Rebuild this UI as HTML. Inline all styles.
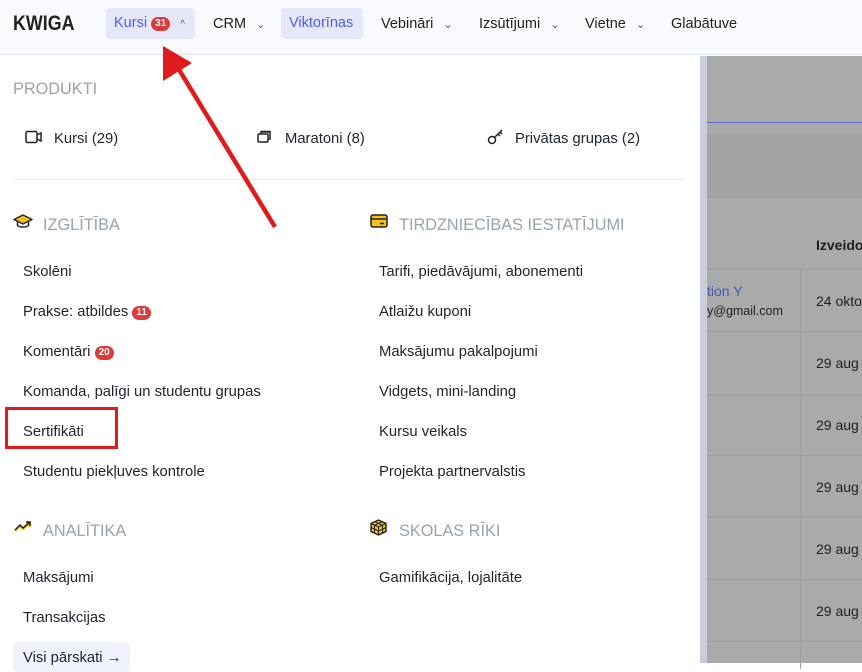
<!DOCTYPE html>
<html><head><meta charset="utf-8">
<style>
*{margin:0;padding:0;box-sizing:border-box}
body{width:862px;height:663px;overflow:hidden;font-family:"Liberation Sans",sans-serif;color:#1f2330;background:#fff;position:relative;font-size:14px}
.hdr{position:absolute;left:0;top:0;width:862px;height:55px;background:#f9f9fe;border-bottom:1px solid #e2e3e8}
.logo{position:absolute;left:13px;top:12px;font-size:21px;font-weight:bold;color:#222;transform:scaleX(0.85);transform-origin:left}
.nav{position:absolute;top:8px;height:31px;line-height:31px;font-size:14.5px;color:#222;padding:0 8px;margin-top:1px}
.nav.act{background:#e6e8fa;color:#4f5ef0;border-radius:4px;margin-top:0}
.chev{font-size:11px;margin-left:6px;color:#555}
.badge{display:inline-block;background:#dd3b3b;color:#fff;font-size:10px;font-weight:bold;border-radius:8px;padding:0 4px;height:14px;line-height:14px;vertical-align:1px}
.t{position:absolute;font-size:14.8px;white-space:nowrap;margin-top:2px}
.h{position:absolute;font-size:16.3px;color:#9aa1b2;white-space:nowrap;margin-top:2px}
.right{position:absolute;left:707px;top:56px;width:155px;height:607px;background:#aaaaaa}
.strip{position:absolute;left:700px;top:56px;width:7px;height:607px;background:#c7ced8}
.rt{position:absolute;font-size:14px;color:#222;white-space:nowrap}
.hl{position:absolute;left:0;width:155px;height:1px;background:#9e9e9e}
</style></head><body>
<div class="hdr">
<div class="logo">KWIGA</div>
<div class="nav act" style="left:106px;width:89px">Kursi <span class="badge">31</span> <span class="chev" style="font-size:10px">^</span></div>
<div class="nav" style="left:205px">CRM <span class="chev">⌄</span></div>
<div class="nav act" style="left:281px;width:82px">Viktorīnas</div>
<div class="nav" style="left:373px">Vebināri <span class="chev">⌄</span></div>
<div class="nav" style="left:471px">Izsūtījumi <span class="chev">⌄</span></div>
<div class="nav" style="left:577px">Vietne <span class="chev">⌄</span></div>
<div class="nav" style="left:663px">Glabātuve</div>
</div>

<div class="h" style="left:13px;top:78px">PRODUKTI</div>
<svg style="position:absolute;left:25px;top:130px" width="18" height="14" viewBox="0 0 18 14"><rect x="1" y="1.5" width="11" height="11" rx="1.5" fill="none" stroke="#222" stroke-width="1.5"/><path d="M12 5l4-2v8l-4-2" fill="none" stroke="#222" stroke-width="1.5"/></svg>
<div class="t" style="left:54px;top:129px">Kursi (29)</div>
<svg style="position:absolute;left:257px;top:128px" width="17" height="16" viewBox="0 0 17 16"><rect x="1" y="6" width="10" height="8" rx="1" fill="none" stroke="#222" stroke-width="1.5"/><path d="M4 6V3.5h9V11h-2M4 4h9" fill="none" stroke="#222" stroke-width="1.5"/></svg>
<div class="t" style="left:285px;top:129px">Maratoni (8)</div>
<svg style="position:absolute;left:487px;top:128px" width="17" height="17" viewBox="0 0 17 17"><circle cx="5" cy="12" r="3.5" fill="none" stroke="#222" stroke-width="1.5"/><path d="M7.5 9.5L15 2M11 6l2 2M13 4l2 2" fill="none" stroke="#222" stroke-width="1.5"/></svg>
<div class="t" style="left:515px;top:129px">Privātas grupas (2)</div>
<div style="position:absolute;left:12px;top:179px;width:673px;height:1px;background:#eceef2"></div>

<svg style="position:absolute;left:13px;top:213px" width="20" height="16" viewBox="0 0 20 16"><path d="M10 2L1 6.5l9 4.5 9-4.5z" fill="#f2c21b" stroke="#222" stroke-width="1.4" stroke-linejoin="round"/><path d="M4.5 8.5v4c2 2 9 2 11 0v-4" fill="none" stroke="#222" stroke-width="1.5"/></svg>
<div class="h" style="left:43px;top:214px">IZGLĪTĪBA</div>
<div class="t" style="left:23px;top:262px">Skolēni</div>
<div class="t" style="left:23px;top:302px">Prakse: atbildes <span class="badge">11</span></div>
<div class="t" style="left:23px;top:342px">Komentāri <span class="badge">20</span></div>
<div class="t" style="left:23px;top:382px">Komanda, palīgi un studentu grupas</div>
<div class="t" style="left:23px;top:422px">Sertifikāti</div>
<div style="position:absolute;left:5px;top:407px;width:113px;height:42px;border:3px solid #e01b1b"></div>
<div class="t" style="left:23px;top:462px">Studentu piekļuves kontrole</div>

<svg style="position:absolute;left:14px;top:520px" width="19" height="14" viewBox="0 0 19 14"><path d="M1 11l5-5 3 3 7-6M12 3h4v4" fill="none" stroke="#f2c21b" stroke-width="2.5"/><path d="M1 10l5-5 3 3 7-6M12 2h4v4" fill="none" stroke="#222" stroke-width="1.5"/></svg>
<div class="h" style="left:43px;top:520px">ANALĪTIKA</div>
<div class="t" style="left:23px;top:568px">Maksājumi</div>
<div class="t" style="left:23px;top:608px">Transakcijas</div>
<div style="position:absolute;left:13px;top:642px;width:117px;height:30px;background:#eff3fc;border-radius:4px"></div>
<div class="t" style="left:23px;top:648px">Visi pārskati →</div>

<svg style="position:absolute;left:370px;top:214px" width="18" height="14" viewBox="0 0 18 14"><rect x="1" y="1" width="16" height="12" rx="2" fill="#f2c21b" stroke="#222" stroke-width="1.5"/><path d="M1 5h16" stroke="#222" stroke-width="1.5"/><path d="M10 9.5h4" stroke="#222" stroke-width="1.5"/></svg>
<div class="h" style="left:399px;top:214px">TIRDZNIECĪBAS IESTATĪJUMI</div>
<div class="t" style="left:379px;top:262px">Tarifi, piedāvājumi, abonementi</div>
<div class="t" style="left:379px;top:302px">Atlaižu kuponi</div>
<div class="t" style="left:379px;top:342px">Maksājumu pakalpojumi</div>
<div class="t" style="left:379px;top:382px">Vidgets, mini-landing</div>
<div class="t" style="left:379px;top:422px">Kursu veikals</div>
<div class="t" style="left:379px;top:462px">Projekta partnervalstis</div>
<svg style="position:absolute;left:370px;top:519px" width="17" height="17" viewBox="0 0 17 17"><path d="M8.5 1L16 4.5v8L8.5 16 1 12.5v-8z" fill="#f2c21b" stroke="#222" stroke-width="1.4"/><path d="M1 4.5l7.5 3.5L16 4.5M8.5 8v8M4.5 6v8.5M12.5 6v8.5M1 8.5l7.5 3.5 7.5-3.5M4.8 2.7l7.5 3.5M12.2 2.7l-7.5 3.5" fill="none" stroke="#222" stroke-width="1"/></svg>
<div class="h" style="left:399px;top:520px">SKOLAS RĪKI</div>
<div class="t" style="left:379px;top:568px">Gamifikācija, lojalitāte</div>

<div class="strip"></div>
<div class="right">
<div style="position:absolute;left:0;top:66px;width:155px;height:1px;background:#5a67c4"></div>
<div style="position:absolute;left:0;top:77px;width:155px;height:65px;background:#a3a3a3"></div>
<div class="rt" style="left:109px;top:181px;font-weight:bold">Izveido</div>
<div style="position:absolute;left:93px;top:213px;width:1px;height:400px;background:#9e9e9e"></div>
<div class="hl" style="top:213px"></div>
<div class="rt" style="left:0;top:227px;color:#4556b8">tion Y</div>
<div class="rt" style="left:0;top:248px;font-size:12.5px">y@gmail.com</div>
<div class="rt" style="left:109px;top:237px">24 okto</div>
<div class="hl" style="top:275px"></div>
<div class="rt" style="left:109px;top:299px">29 aug</div>
<div class="hl" style="top:338px"></div>
<div class="rt" style="left:109px;top:361px">29 aug</div>
<div class="hl" style="top:399px"></div>
<div class="rt" style="left:109px;top:423px">29 aug</div>
<div class="hl" style="top:461px"></div>
<div class="rt" style="left:109px;top:485px">29 aug</div>
<div class="hl" style="top:523px"></div>
<div class="rt" style="left:109px;top:547px">29 aug</div>
<div class="hl" style="top:585px"></div>
</div>

<svg style="position:absolute;left:0;top:0" width="862" height="663"><line x1="275" y1="227" x2="178" y2="68" stroke="#e01b1b" stroke-width="4.5"/><path d="M163 46L192 63 163 81z" fill="#e01b1b"/></svg>
</body></html>
